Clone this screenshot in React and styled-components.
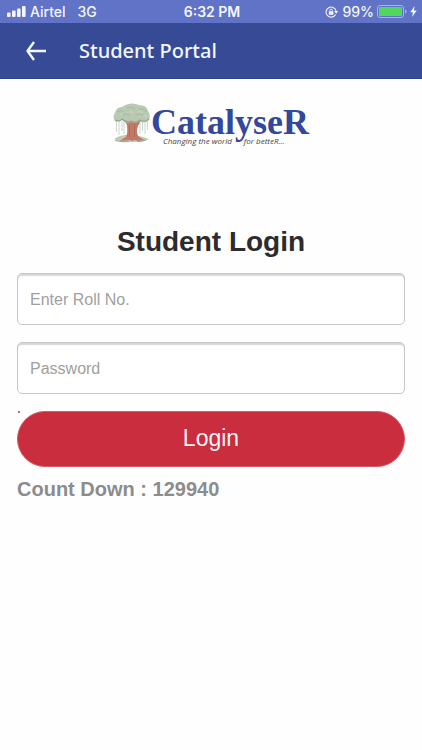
import React, {useState} from 'react';
import styled, {createGlobalStyle} from 'styled-components';

const GlobalStyle = createGlobalStyle`
    * { box-sizing: border-box; }
    body {
        margin: 0;
        background: #fefefe;
        font-family: "Liberation Sans", Arial, sans-serif;
    }
`

const StatusBar = styled.div`
    display: grid; grid-template-columns: 1fr auto 1fr; align-items: center;
    height: 23px; padding: 0 5px 0 7px;
    background: #6073c6; color: #f4f6ff;
    font-family: Inter, sans-serif; font-size: 14px; font-weight: 500;
`

const StatusGroup = styled.div`
    display: flex; align-items: center;
    gap: ${props => props.$end ? '3px' : '4px'};
    justify-content: ${props => props.$end ? 'flex-end' : 'flex-start'};
`

const Network = styled.span`
    padding-left: 8px;
`

const Clock = styled.div`
    font-weight: 600;
`

const Header = styled.header`
    display: flex; align-items: center; gap: 31px;
    height: 56px; padding: 0 25px;
    background: #364a96; color: #f4f6ff;
    border-bottom: 1px solid #2f4187;
`

const BackButton = styled.button`
    display: flex; padding: 0;
    border: none; background: none; color: inherit;
`

const HeaderTitle = styled.div`
    font-family: "Noto Sans", sans-serif; font-size: 20px; font-weight: 500;
`

const Main = styled.main`
    padding: 24px 17px;
`

const Logo = styled.div`
    display: flex; justify-content: center; align-items: flex-start;
    height: 44px;
`

const LogoText = styled.div`
    display: flex; flex-direction: column;
    color: #33479b;
    font-family: "Liberation Serif", serif; font-size: 36px; line-height: 38px; font-weight: 700;
`

const Tagline = styled.div`
    display: flex; gap: 12px;
    margin-top: -5px; padding-left: 12px;
    color: #444;
    font-family: "Open Sans", sans-serif; font-size: 8px; line-height: 10px;
    font-weight: 500; font-style: italic;
`

const Title = styled.h1`
    margin: 78px 0 14px;
    color: #2d2b2d;
    font-size: 28px; line-height: 34px; text-align: center;
`

const Form = styled.form`
    display: flex; flex-direction: column; gap: 17px;
`

const Field = styled.input`
    width: 100%; height: 52px; padding: 2px 12px 0;
    border: 1px solid #c6c6c6; border-radius: 5px;
    background: #fff; box-shadow: inset 0 2px 1px #d8d8d8;
    color: #333; font-family: inherit; font-size: 16px;
    &::placeholder { color: #a0a0a0; opacity: 1; }
`

const Submit = styled.div`
    position: relative;
`

const Mark = styled.span`
    position: absolute; left: 1px; top: 0;
    width: 2px; height: 2px; border-radius: 1px;
    background: #c92d3e;
`

const LoginButton = styled.button`
    display: block; width: 100%; height: 56px; padding: 0 0 2px;
    border: 1px solid #d75a67; border-radius: 28px;
    background: #c92d3e; color: #fcf3f4;
    font-family: inherit; font-size: 23px;
`

const CountDown = styled.div`
    margin-top: 10px;
    color: #8c8c8c;
    font-size: 20px; line-height: 24px; font-weight: 700;
`

function Signal() {
    return (
        <svg width="19" height="11" viewBox="0 0 19 11" fill="currentColor" aria-hidden="true">
            <rect x="0" y="6.5" width="3.6" height="4.5" rx="1" />
            <rect x="5" y="4.5" width="3.6" height="6.5" rx="1" />
            <rect x="10" y="2.5" width="3.6" height="8.5" rx="1" />
            <rect x="15" y="0" width="3.6" height="11" rx="1" />
        </svg>
    );
}

function RotationLock() {
    return (
        <svg width="14" height="12" viewBox="0 0 14 12" fill="none" stroke="currentColor" aria-hidden="true">
            <path d="M10.6 8.6A5.1 5.1 0 1 1 11.1 4.9" strokeWidth="1.1" />
            <path d="M9.2 5.1h4l-2 2.7z" fill="currentColor" stroke="none" />
            <rect x="3.8" y="5.3" width="4.6" height="3.4" rx=".4" fill="currentColor" stroke="none" />
            <path d="M4.8 5.5V4.4a1.3 1.3 0 0 1 2.6 0v1.1" strokeWidth=".9" />
        </svg>
    );
}

function Battery() {
    return (
        <svg width="30" height="13" viewBox="0 0 30 13" aria-hidden="true">
            <rect x=".5" y=".5" width="26" height="12" rx="2.5" fill="none" stroke="#a9b4e3" />
            <rect x="2" y="2" width="23" height="9" rx="1" fill="#50d75c" />
            <path d="M28 4.5q1.6.5 1.6 2t-1.6 2z" fill="#a9b4e3" />
        </svg>
    );
}

function Bolt() {
    return (
        <svg width="7" height="11" viewBox="0 0 7 11" fill="currentColor" aria-hidden="true">
            <path d="M4.5 0 .3 6.2h2.6L2.1 11l4.6-6.4H3.9z" />
        </svg>
    );
}

function BackArrow() {
    return (
        <svg width="23" height="20" viewBox="0 0 23 20" fill="none" stroke="currentColor" strokeWidth="2.4" aria-hidden="true">
            <path d="M2.5 10H21M9 1 2.5 10 9 19" strokeLinejoin="round" />
        </svg>
    );
}

function Tree() {
    return (
        <svg width="38" height="40" viewBox="0 0 38 40" fill="none" aria-hidden="true">
            <path d="M1 36q8-5 18-4t17 4q-5 3-17 3-12 0-18-3z" fill="#bccbb4" />
            <path d="M2 37.500q8 2 14 1M24 38.500q5 0 9-1.500" stroke="#93a58e" />
            <path d="M10 15l4 7q1 7-1 12l-6 3.500q5 .5 9-.5 3 1.500 5 .3 5 .8 10-.2l-6-4q-2-6 0-10l4-7q-5 2-9 2-6 0-10-3z" fill="#c37967" />
            <path d="M16.500 22v12M21.500 21v13" stroke="#ab6656" strokeWidth=".7" />
            <path d="M2 18Q-1 14 2 10 3 4 9 4 17-2 26 2q8 0 9 6 3 5 1 9-4 4-9 1-4 3-9 1-6 2-9-2-3 3-7 1z" fill="#b9c9b2" />
            <path d="M2 17q5 2 7-1 4 4 9 2 4 3 9-1 5 3 9-1" stroke="#93a890" strokeWidth="1.200" />
            <path d="M4 9q4-3 7 0M14 5q6-2 8 2M26 6q5-1 7 3M10 12q4-2 7 0M23 12q4-2 7 0" stroke="#a8b9a2" strokeWidth="1" />
            <path d="M6 12q2-1 3 0M16 9q3-1 4 1M25 9q3-1 4 1M31 13q2-1 3 1" stroke="#cbd8c4" strokeWidth="1.200" />
            <path d="M3.500 18v11M6 18v14M9 18v10M11 19v12M27 19v12M29.500 18v10M32 18v13M34.500 17v10" stroke="#b4c4b4" strokeWidth=".7" />
        </svg>
    );
}

export default function App() {
    const [rollNo, setRollNo] = useState("");
    const [password, setPassword] = useState("");

    const onSubmit = (e) => {
        e.preventDefault();
    }

    return(
        <>
            <GlobalStyle />
            <StatusBar>
                <StatusGroup>
                    <Signal />
                    <span>Airtel</span>
                    <Network>3G</Network>
                </StatusGroup>
                <Clock>6:32 PM</Clock>
                <StatusGroup $end>
                    <RotationLock />
                    <span>99%</span>
                    <Battery />
                    <Bolt />
                </StatusGroup>
            </StatusBar>
            <Header>
                <BackButton type="button" aria-label="Back"><BackArrow /></BackButton>
                <HeaderTitle>Student Portal</HeaderTitle>
            </Header>
            <Main>
                <Logo>
                    <Tree />
                    <LogoText>
                        CatalyseR
                        <Tagline>
                            <span>Changing the world</span>
                            <span>for betteR...</span>
                        </Tagline>
                    </LogoText>
                </Logo>
                <Title>Student Login</Title>
                <Form onSubmit={onSubmit}>
                    <Field type="text" name="rollNo" aria-label="Roll No." placeholder="Enter Roll No."
                        value={rollNo} onChange={(e) => setRollNo(e.target.value)} />
                    <Field type="password" name="password" aria-label="Password" placeholder="Password"
                        value={password} onChange={(e) => setPassword(e.target.value)} />
                    <Submit>
                        <Mark />
                        <LoginButton type="submit">Login</LoginButton>
                    </Submit>
                </Form>
                <CountDown>Count Down : 129940</CountDown>
            </Main>
        </>
    );
}
